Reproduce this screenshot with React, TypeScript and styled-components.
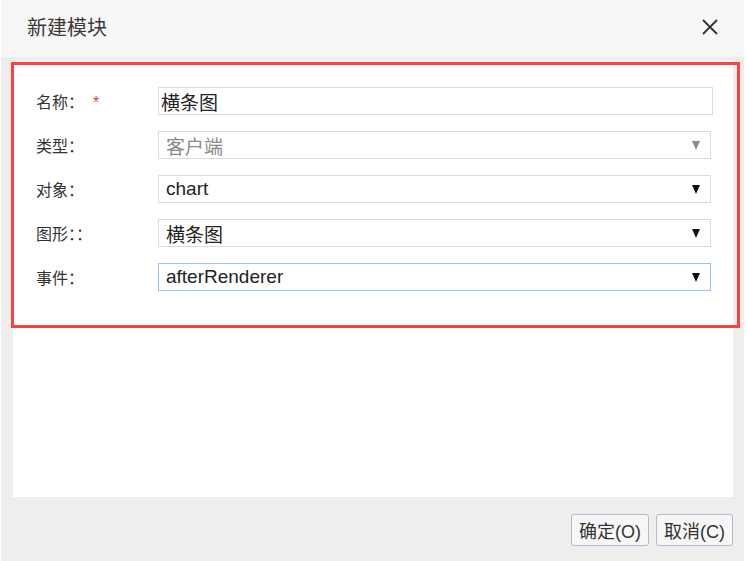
import React from 'react';
import styled, { createGlobalStyle } from 'styled-components';

const GlobalStyle = createGlobalStyle`
  html, body {
    margin: 0;
    padding: 0;
    background: #ffffff;
  }
  body {
    font-family: "Liberation Sans", "Noto Sans CJK SC", sans-serif;
  }
`;

const Dialog = styled.div`
  width: 743px;
  height: 561px;
  margin-left: 1px;
  display: flex;
  flex-direction: column;
  background: #efeeec;
`;

const Header = styled.div`
  height: 57px;
  flex: 0 0 57px;
  display: flex;
  align-items: center;
  justify-content: space-between;
  padding: 0 24px 0 26px;
  background: #f7f7f7;
  box-sizing: border-box;
`;

const Title = styled.span`
  font-size: 20px;
  color: #3a3a3a;
  margin-top: -4px;
`;

const CloseButton = styled.button`
  border: none;
  background: none;
  padding: 0;
  width: 20px;
  height: 20px;
  margin-top: -4px;
  display: flex;
  align-items: center;
  justify-content: center;
  cursor: pointer;
`;

const Body = styled.div`
  flex: 1;
  display: flex;
  flex-direction: column;
  padding: 4px 11px 0 12px;
`;

const Panel = styled.div`
  height: 436px;
  background: #ffffff;
  display: flex;
  flex-direction: column;
`;

const Highlight = styled.div`
  margin: 1px -7px 0 -2px;
  border: 3px solid #ff4040;
  padding: 22px 0 34px 22px;
  display: flex;
  flex-direction: column;
  gap: 16px;
`;

const Row = styled.div`
  display: flex;
  align-items: center;
  height: 28px;
`;

const Label = styled.label`
  width: 122px;
  flex: 0 0 122px;
  font-size: 16px;
  color: #333333;
`;

const Required = styled.span`
  color: #e8413b;
  margin-left: 9px;
`;

const TextInput = styled.div`
  width: 555px;
  height: 28px;
  box-sizing: border-box;
  border: 1px solid #dcdcdc;
  padding: 0 2px;
  display: flex;
  align-items: center;
  font-size: 19px;
  color: #222222;
`;

const Select = styled.div<{ $disabled?: boolean; $focused?: boolean }>`
  width: 553px;
  height: 28px;
  box-sizing: border-box;
  border: 1px solid ${p => (p.$focused ? '#9fc2ee' : '#dcdcdc')};
  padding: 0 10px 0 7px;
  display: flex;
  align-items: center;
  justify-content: space-between;
  font-size: 19px;
  color: ${p => (p.$disabled ? '#8a8a8a' : '#222222')};
`;

const Arrow = styled.span<{ $disabled?: boolean }>`
  width: 0;
  height: 0;
  border-left: 4.5px solid transparent;
  border-right: 4.5px solid transparent;
  border-top: 9px solid ${p => (p.$disabled ? '#8c8c8c' : '#111111')};
  margin-top: 1px;
`;

const Footer = styled.div`
  flex: 1;
  display: flex;
  justify-content: flex-end;
  align-items: flex-start;
  gap: 7px;
  padding-top: 17px;
`;

const Button = styled.button`
  height: 32px;
  padding: 0 7px;
  border: 1px solid #aebbd0;
  border-radius: 3px;
  background: #f7f7f7;
  font-family: "Liberation Sans", "Noto Sans CJK SC", sans-serif;
  font-size: 18px;
  color: #333333;
  cursor: pointer;
`;

const CloseIcon = () => (
  <svg width="18" height="18" viewBox="0 0 18 18">
    <path d="M2 2 L16 16 M16 2 L2 16" stroke="#333" strokeWidth="1.8" fill="none" />
  </svg>
);

export default function App() {
  return (
    <>
      <GlobalStyle />
      <Dialog>
        <Header>
          <Title>新建模块</Title>
          <CloseButton aria-label="关闭">
            <CloseIcon />
          </CloseButton>
        </Header>
        <Body>
          <Panel>
            <Highlight>
              <Row>
                <Label>
                  名称：<Required>*</Required>
                </Label>
                <TextInput>横条图</TextInput>
              </Row>
              <Row>
                <Label>类型：</Label>
                <Select $disabled>
                  客户端
                  <Arrow $disabled />
                </Select>
              </Row>
              <Row>
                <Label>对象：</Label>
                <Select>
                  chart
                  <Arrow />
                </Select>
              </Row>
              <Row>
                <Label>图形：：</Label>
                <Select>
                  横条图
                  <Arrow />
                </Select>
              </Row>
              <Row>
                <Label>事件：</Label>
                <Select $focused>
                  afterRenderer
                  <Arrow />
                </Select>
              </Row>
            </Highlight>
          </Panel>
          <Footer>
            <Button>确定(O)</Button>
            <Button>取消(C)</Button>
          </Footer>
        </Body>
      </Dialog>
    </>
  );
}
